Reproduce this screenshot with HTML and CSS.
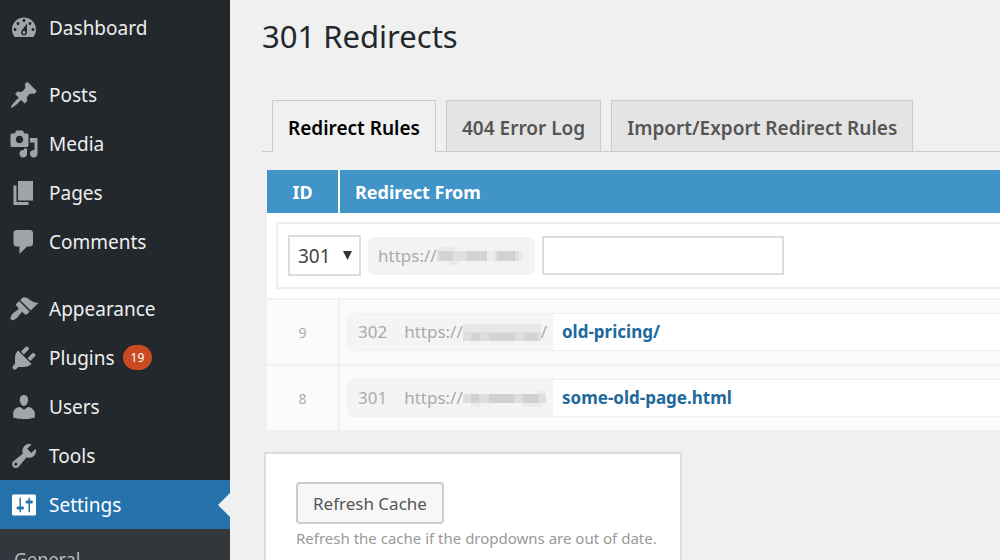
FILE: index.html
```
<!DOCTYPE html>
<html lang="en">
<head>
    <meta charset="UTF-8">
    <meta name="viewport" content="width=device-width, initial-scale=1.0">
    <title>301 Redirects</title>
    <link rel="stylesheet" href="styles.css">
</head>
<body>

    <nav class="admin-menu">
        <ul class="menu-list">
            <li class="menu-item">
                <a href="#">
                    <svg class="menu-icon" viewBox="0 0 20 20"><path d="M3.76 16h12.48c1.1-1.37 1.76-3.11 1.76-5 0-4.42-3.58-8-8-8s-8 3.58-8 8c0 1.89.66 3.63 1.76 5zM10 4c.55 0 1 .45 1 1s-.45 1-1 1-1-.45-1-1 .45-1 1-1zM6 6c.55 0 1 .45 1 1s-.45 1-1 1-1-.45-1-1 .45-1 1-1zm8 0c.55 0 1 .45 1 1s-.45 1-1 1-1-.45-1-1 .45-1 1-1zm-5.37 5.55L12 7v6c0 1.1-.9 2-2 2s-2-.9-2-2c0-.57.24-1.08.63-1.45zM4 10c.55 0 1 .45 1 1s-.45 1-1 1-1-.45-1-1 .45-1 1-1zm12 0c.55 0 1 .45 1 1s-.45 1-1 1-1-.45-1-1 .45-1 1-1zm-5 3c0-.55-.45-1-1-1s-1 .45-1 1 .45 1 1 1 1-.45 1-1z"/></svg>
                    Dashboard
                </a>
            </li>
            <li class="menu-item group-start">
                <a href="#">
                    <svg class="menu-icon" viewBox="0 0 20 20"><path d="M10.44 3.02l1.82-1.82 6.36 6.35-1.83 1.82c-1.05-.68-2.48-.57-3.41.36l-.75.75c-.92.93-1.04 2.35-.35 3.41l-1.83 1.82-2.41-2.41-2.8 2.79c-.42.42-3.38 2.71-3.8 2.29s1.86-3.39 2.28-3.81l2.79-2.79L4.1 9.36l1.83-1.82c1.05.69 2.48.57 3.4-.36l.75-.75c.93-.92 1.05-2.35.36-3.41z"/></svg>
                    Posts
                </a>
            </li>
            <li class="menu-item">
                <a href="#">
                    <svg class="menu-icon" viewBox="0 0 20 20"><path d="M13 11V4c0-.55-.45-1-1-1h-1.67L9 1H5L3.67 3H2c-.55 0-1 .45-1 1v7c0 .55.45 1 1 1h10c.55 0 1-.45 1-1zM7 4.5c1.38 0 2.5 1.12 2.5 2.5S8.38 9.5 7 9.5 4.5 8.38 4.5 7 5.62 4.5 7 4.5zM14 6h5v10.5c0 1.38-1.12 2.5-2.5 2.5S14 17.88 14 16.5s1.12-2.5 2.5-2.5c.17 0 .34.02.5.05V9h-3V6zm-4 8.05V13h2v3.5c0 1.38-1.12 2.5-2.5 2.5S7 17.88 7 16.5 8.12 14 9.5 14c.17 0 .34.02.5.05z"/></svg>
                    Media
                </a>
            </li>
            <li class="menu-item">
                <a href="#">
                    <svg class="menu-icon" viewBox="0 0 20 20"><path d="M6 15V2h10v13H6zm-1 1h8v2H3V5h2v11z"/></svg>
                    Pages
                </a>
            </li>
            <li class="menu-item">
                <a href="#">
                    <svg class="menu-icon" viewBox="0 0 20 20"><path d="M5 2h9c1.1 0 2 .9 2 2v7c0 1.1-.9 2-2 2h-2l-5 5v-5H5c-1.1 0-2-.9-2-2V4c0-1.1.9-2 2-2z"/></svg>
                    Comments
                </a>
            </li>
            <li class="menu-item group-start">
                <a href="#">
                    <svg class="menu-icon" viewBox="0 0 20 20"><path d="M14.48 11.06L7.41 3.99l1.5-1.5c.5-.56 2.3-.47 3.51.32 1.21.8 1.43 1.28 2.91 2.1 1.18.64 2.45 1.26 4.45.85zm-.71.71L6.7 4.7 4.93 6.47c-.39.39-.39 1.02 0 1.41l1.06 1.06c.39.39.39 1.03 0 1.42-.6.6-1.43 1.11-2.21 1.69-.35.26-.7.53-1.01.84C1.43 14.23.4 16.08 1.4 17.07c.99 1 2.84-.03 4.18-1.36.31-.31.58-.66.85-1.02.57-.78 1.08-1.61 1.69-2.21.39-.39 1.02-.39 1.41 0l1.06 1.06c.39.39 1.02.39 1.41 0z"/></svg>
                    Appearance
                </a>
            </li>
            <li class="menu-item">
                <a href="#">
                    <svg class="menu-icon" viewBox="0 0 20 20"><path d="M13.11 4.36L9.87 7.6 8 5.73l3.24-3.24c.35-.34 1.05-.2 1.56.32.52.51.66 1.21.31 1.55zm-8 1.77l.91-1.12 9.01 9.01-1.19.84c-.71.71-2.63 1.16-3.82 1.16H6.14L4.9 17.26c-.59.59-1.54.59-2.12 0-.59-.58-.59-1.53 0-2.12l1.24-1.24v-3.88c0-1.13.4-3.19 1.09-3.89zm7.26 3.97l3.24-3.24c.34-.35 1.04-.21 1.55.31.52.51.66 1.21.31 1.55l-3.24 3.25z"/></svg>
                    Plugins
                    <span class="update-count">19</span>
                </a>
            </li>
            <li class="menu-item">
                <a href="#">
                    <svg class="menu-icon" viewBox="0 0 20 20"><path d="M10 9.25c-2.27 0-2.73-3.44-2.73-3.44C7 4.02 7.82 2 9.97 2c2.16 0 2.98 2.02 2.71 3.81 0 0-.41 3.44-2.68 3.44zm0 2.57L12.72 10c2.39 0 4.52 2.33 4.52 4.53v2.49s-3.65 1.13-7.24 1.13c-3.65 0-7.24-1.13-7.24-1.13v-2.49c0-2.25 1.94-4.48 4.47-4.48z"/></svg>
                    Users
                </a>
            </li>
            <li class="menu-item">
                <a href="#">
                    <svg class="menu-icon" viewBox="0 0 20 20"><path d="M16.68 9.77c-1.34 1.34-3.3 1.67-4.95.99l-5.41 6.52c-.99.99-2.59.99-3.58 0s-.99-2.59 0-3.57l6.52-5.42c-.68-1.65-.35-3.61.99-4.95 1.28-1.28 3.12-1.62 4.72-1.06l-2.89 2.89 2.82 2.82 2.86-2.87c.53 1.58.18 3.39-1.08 4.65zM3.81 16.21c.4.39 1.04.39 1.43 0 .4-.4.4-1.04 0-1.43-.39-.4-1.03-.4-1.43 0-.39.39-.39 1.03 0 1.43z"/></svg>
                    Tools
                </a>
            </li>
            <li class="menu-item current">
                <a href="#">
                    <svg class="menu-icon" viewBox="0 0 20 20"><path d="M18 16V4c0-.55-.45-1-1-1H3c-.55 0-1 .45-1 1v12c0 .55.45 1 1 1h14c.55 0 1-.45 1-1zM8 11h1c.55 0 1 .45 1 1s-.45 1-1 1H8v1.5c0 .28-.22.5-.5.5s-.5-.22-.5-.5V13H6c-.55 0-1-.45-1-1s.45-1 1-1h1V5.5c0-.28.22-.5.5-.5s.5.22.5.5V11zm5-2h-1c-.55 0-1-.45-1-1s.45-1 1-1h1V5.5c0-.28.22-.5.5-.5s.5.22.5.5V7h1c.55 0 1 .45 1 1s-.45 1-1 1h-1v5.5c0 .28-.22.5-.5.5s-.5-.22-.5-.5V9z"/></svg>
                    Settings
                </a>
            </li>
        </ul>
        <ul class="submenu">
            <li><a href="#">General</a></li>
        </ul>
    </nav>

    <main class="content">
        <h1>301 Redirects</h1>

        <nav class="tabs">
            <a href="#" class="tab active">Redirect Rules</a>
            <a href="#" class="tab">404 Error Log</a>
            <a href="#" class="tab">Import/Export Redirect Rules</a>
        </nav>

        <table class="redirects">
            <thead>
                <tr>
                    <th class="col-id">ID</th>
                    <th>Redirect From</th>
                </tr>
            </thead>
            <tbody>
                <tr class="new-row">
                    <td colspan="2">
                        <form class="new-rule">
                            <select class="type-select" aria-label="Redirect type">
                                <option>301</option>
                                <option>302</option>
                            </select>
                            <label class="site-prefix redacted" for="redirect-from">https://<svg viewBox="0 0 86 20" width="86" height="20"><path fill="#e0e0e0" d="M0 5h82v10H0z"/><path fill="#ebebeb" d="M50 5h8v10h-8zM82 5h4v10h-4zM12 15h10v4H12zM0 1h18v4H0z"/><path fill="#d3d3d3" d="M2 5h14v10H2zM30 5h20v10H30zM60 5h18v10H60z"/></svg></label>
                            <input type="text" id="redirect-from" class="from-input">
                        </form>
                    </td>
                </tr>
                <tr>
                    <td class="col-id">9</td>
                    <td>
                        <div class="rule">
                            <span class="rule-prefix"><span>302</span><span class="redacted">https://<svg viewBox="0 0 78 20" width="78" height="20"><path fill="#e7e7e7" d="M0 2h78v17H0z"/><path fill="#dedede" d="M0 10h78v9H0z"/><path fill="#d3d3d3" d="M8 11h9v8H8zM26 11h26v8H26zM61 11h14v8H61z"/></svg>/</span></span>
                            <a href="#" class="rule-path">old-pricing/</a>
                        </div>
                    </td>
                </tr>
                <tr>
                    <td class="col-id">8</td>
                    <td>
                        <div class="rule">
                            <span class="rule-prefix"><span>301</span><span class="redacted">https://<svg viewBox="0 0 83 20" width="83" height="20"><path fill="#ebebeb" d="M8 15h10v4H8zM60 15h18v4H60zM74 2h9v4h-9z"/><path fill="#dedede" d="M0 6h83v9H0z"/><path fill="#d1d1d1" d="M8 6h8v9H8zM26 6h25v9H26zM60 6h16v9H60z"/></svg></span></span>
                            <a href="#" class="rule-path">some-old-page.html</a>
                        </div>
                    </td>
                </tr>
            </tbody>
        </table>

        <section class="cache-box">
            <button type="button" class="button">Refresh Cache</button>
            <p class="hint">Refresh the cache if the dropdowns are out of date.</p>
        </section>
    </main>

</body>
</html>
```
FILE: styles.css
```
* {
    box-sizing: border-box;
}

body {
    margin: 0;
    display: flex;
    height: 100vh;
    overflow: hidden;
    background: #f0f0f0;
    font-family: "Noto Sans", "Open Sans", sans-serif;
    font-size: 19px;
    color: #23282d;
}

a {
    text-decoration: none;
}

/* Admin menu */

.admin-menu {
    flex: 0 0 230px;
    background: #23282d;
}

.menu-list {
    list-style: none;
    margin: 0;
    padding: 3px 0 0;
}

.menu-item a {
    display: flex;
    align-items: center;
    height: 49px;
    padding-left: 9px;
    color: #eee;
}

.group-start {
    margin-top: 18px;
}

.menu-icon {
    width: 30px;
    height: 30px;
    margin-right: 10px;
    fill: #a0a5aa;
}

.update-count {
    margin-left: 8px;
    padding: 0 8px;
    border-radius: 13px;
    background: #ca4a1f;
    color: #fff;
    font-size: 12px;
    line-height: 25px;
}

.current {
    position: relative;
    background: #2572ad;
}

.current a {
    color: #fff;
}

.current .menu-icon {
    fill: #fff;
}

.current::after {
    content: "";
    position: absolute;
    right: 0;
    top: 13px;
    border: 12px solid transparent;
    border-left: 0;
    border-right-color: #f0f0f0;
}

.submenu {
    list-style: none;
    margin: 0;
    padding: 17px 14px;
    background: #32373c;
    font-size: 18px;
    line-height: 26px;
}

.submenu a {
    color: #b4b9be;
}

/* Content */

.content {
    flex: 1;
    min-width: 0;
    padding: 14px 0 0 32px;
}

h1 {
    margin: 0;
    font-size: 31px;
    font-weight: 400;
    line-height: 44px;
}

.tabs {
    display: flex;
    gap: 10px;
    margin-top: 42px;
    padding-left: 10px;
    border-bottom: 1px solid #ccc;
}

.tab {
    padding: 14px 15px 10px;
    border: 1px solid #ccc;
    border-bottom: 0;
    background: #e4e4e4;
    color: #555;
    font-weight: 600;
    line-height: 26px;
}

.tab.active {
    margin-bottom: -1px;
    background: #f0f0f0;
    color: #000;
}

/* Redirects table */

.redirects {
    width: calc(100% - 5px);
    margin: 18px 0 0 5px;
    border-spacing: 0;
    background: #fbfbfb;
}

.redirects th {
    height: 43px;
    padding: 0 15px;
    background: #4094c7;
    color: #fff;
    font-size: 18px;
    font-weight: 700;
    text-align: left;
}

.redirects td {
    height: 66px;
    padding: 0 0 0 7px;
    border-bottom: 2px solid #f1f1f1;
}

.redirects .col-id {
    width: 73px;
    padding: 0;
    border-right: 2px solid #f1f1f1;
    text-align: center;
}

.redirects th.col-id {
    border-color: #fff;
}

.redirects td.col-id {
    color: #aaa;
    font-size: 14px;
}

.redirects .new-row td {
    padding: 9px 0 9px 9px;
    background: #fff;
}

.new-rule {
    display: flex;
    align-items: center;
    gap: 7px;
    height: 67px;
    padding-left: 10px;
    border: 2px solid #eee;
    border-right: 0;
}

.type-select {
    width: 73px;
    height: 41px;
    padding: 0 8px;
    border: 2px solid #ddd;
    appearance: none;
    background: #fff url("data:image/svg+xml,%3Csvg xmlns='http://www.w3.org/2000/svg' width='9' height='9'%3E%3Cpath d='M0 0h9L4.5 9z' fill='%23333'/%3E%3C/svg%3E") no-repeat right 7px center;
    color: #444;
    font: inherit;
}

.redacted {
    display: inline-flex;
    align-items: center;
    white-space: nowrap;
}

.site-prefix {
    width: 167px;
    height: 38px;
    padding: 0 10px;
    border-radius: 7px;
    background: #f3f3f3;
    color: #aaa;
    font-size: 17px;
}

.from-input {
    width: 242px;
    height: 39px;
    border: 2px solid #ddd;
    background: #fff;
    font: inherit;
}

.rule {
    display: flex;
    height: 38px;
    border: 1px solid #f0f0f0;
    border-right: 0;
    border-radius: 7px 0 0 7px;
    background: #fff;
    font-size: 17px;
    line-height: 36px;
}

.rule-prefix {
    display: flex;
    gap: 17px;
    width: 205px;
    padding-left: 10px;
    border-radius: 7px 0 0 7px;
    background: #f4f4f4;
    color: #aaa;
}

.rule-path {
    padding-left: 9px;
    color: #21699c;
    font-weight: 700;
}

/* Cache box */

.cache-box {
    width: 418px;
    margin: 20px 0 0 2px;
    padding: 28px 30px;
    border: 2px solid #ddd;
    background: #fff;
}

.button {
    height: 42px;
    padding: 0 15px;
    border: 2px solid #ccc;
    border-radius: 4px;
    background: #f7f7f7;
    color: #555;
    font: inherit;
    font-size: 17px;
}

.hint {
    margin: 2px 0 0;
    color: #999;
    font-size: 15px;
    line-height: 24px;
    white-space: nowrap;
}
```
